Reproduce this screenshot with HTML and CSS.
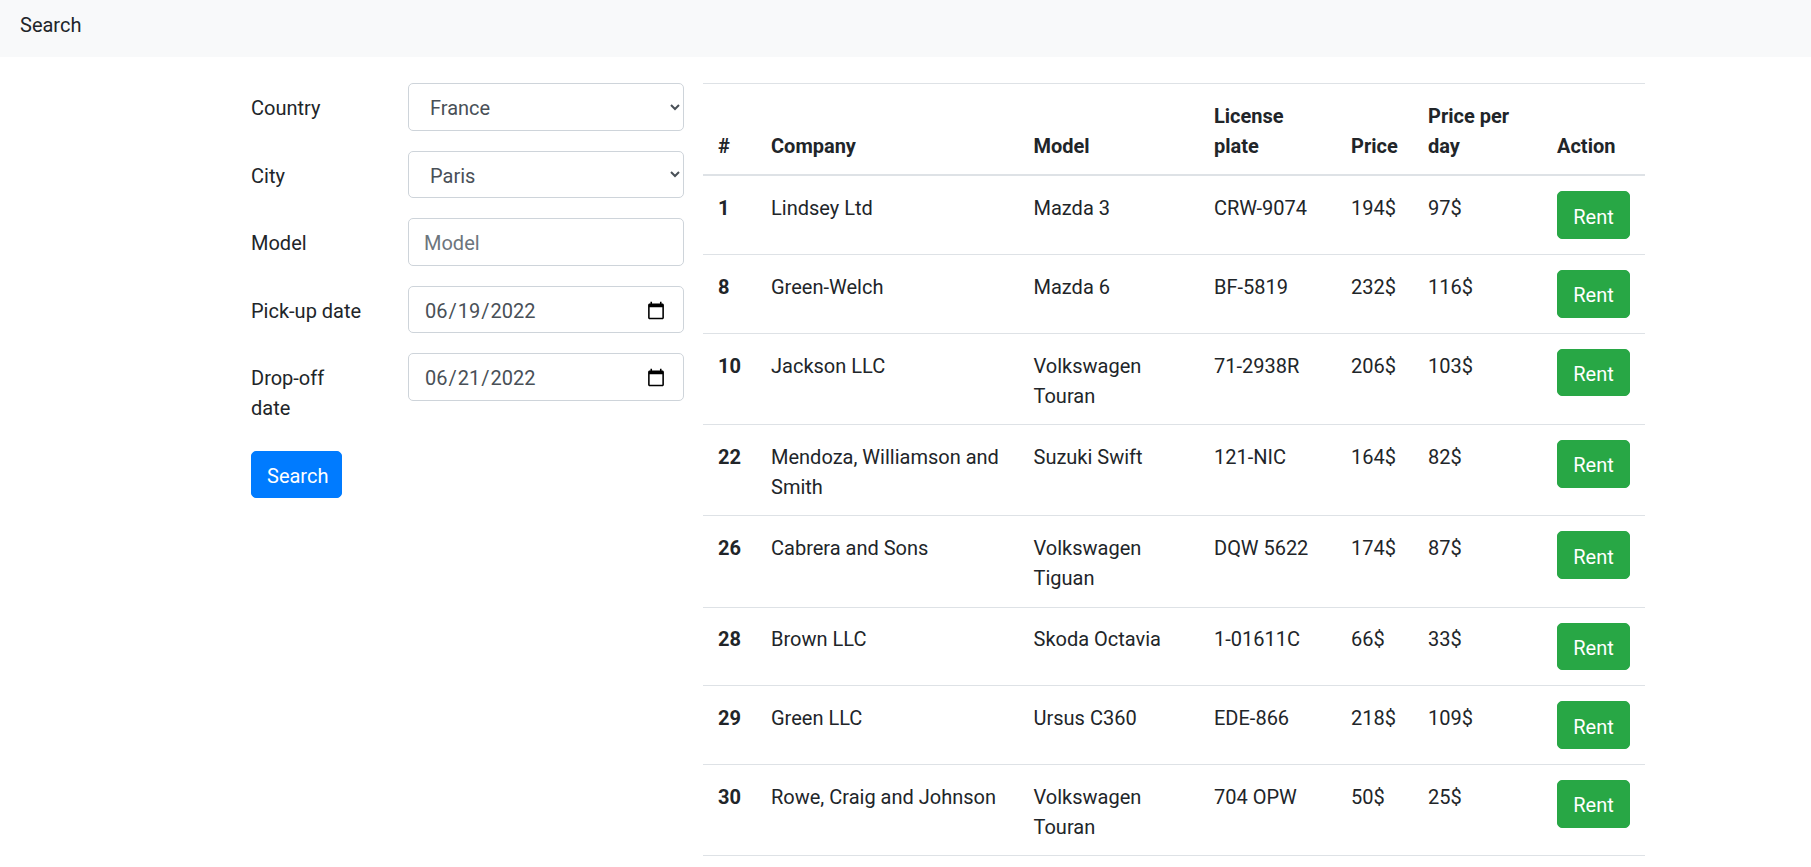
FILE: index.html
```html
<!DOCTYPE html>
<html lang="en">
<head>
<meta charset="utf-8">
<title>Search</title>
<link rel="stylesheet" href="styles.css">
</head>
<body>
<nav class="navbar"><span class="navbar-text">Search</span></nav>
<main class="page">
  <form class="search-form">
    <div class="form-row">
      <label class="form-label" for="country">Country</label>
      <div class="form-field">
        <select id="country" class="form-control form-select">
          <option>France</option>
        </select>
      </div>
    </div>
    <div class="form-row">
      <label class="form-label" for="city">City</label>
      <div class="form-field">
        <select id="city" class="form-control form-select">
          <option>Paris</option>
        </select>
      </div>
    </div>
    <div class="form-row">
      <label class="form-label" for="model">Model</label>
      <div class="form-field">
        <input id="model" class="form-control" type="text" placeholder="Model">
      </div>
    </div>
    <div class="form-row">
      <label class="form-label" for="pickup">Pick-up date</label>
      <div class="form-field">
        <input id="pickup" class="form-control" type="date" value="2022-06-19">
      </div>
    </div>
    <div class="form-row">
      <label class="form-label" for="dropoff">Drop-off date</label>
      <div class="form-field">
        <input id="dropoff" class="form-control" type="date" value="2022-06-21">
      </div>
    </div>
    <button type="button" class="btn btn-primary">Search</button>
  </form>

  <table class="cars-table">
    <colgroup>
      <col class="col-id">
      <col class="col-company">
      <col class="col-model">
      <col class="col-plate">
      <col class="col-price">
      <col class="col-day">
      <col class="col-action">
    </colgroup>
    <thead>
      <tr>
        <th>#</th>
        <th>Company</th>
        <th>Model</th>
        <th>License plate</th>
        <th>Price</th>
        <th>Price per day</th>
        <th>Action</th>
      </tr>
    </thead>
    <tbody>
      <tr><th>1</th><td>Lindsey Ltd</td><td>Mazda 3</td><td>CRW-9074</td><td>194$</td><td>97$</td><td class="action-cell"><button type="button" class="btn btn-success">Rent</button></td></tr>
      <tr><th>8</th><td>Green-Welch</td><td>Mazda 6</td><td>BF-5819</td><td>232$</td><td>116$</td><td class="action-cell"><button type="button" class="btn btn-success">Rent</button></td></tr>
      <tr><th>10</th><td>Jackson LLC</td><td>Volkswagen Touran</td><td>71-2938R</td><td>206$</td><td>103$</td><td class="action-cell"><button type="button" class="btn btn-success">Rent</button></td></tr>
      <tr><th>22</th><td>Mendoza, Williamson and Smith</td><td>Suzuki Swift</td><td>121-NIC</td><td>164$</td><td>82$</td><td class="action-cell"><button type="button" class="btn btn-success">Rent</button></td></tr>
      <tr><th>26</th><td>Cabrera and Sons</td><td>Volkswagen Tiguan</td><td>DQW 5622</td><td>174$</td><td>87$</td><td class="action-cell"><button type="button" class="btn btn-success">Rent</button></td></tr>
      <tr><th>28</th><td>Brown LLC</td><td>Skoda Octavia</td><td>1-01611C</td><td>66$</td><td>33$</td><td class="action-cell"><button type="button" class="btn btn-success">Rent</button></td></tr>
      <tr><th>29</th><td>Green LLC</td><td>Ursus C360</td><td>EDE-866</td><td>218$</td><td>109$</td><td class="action-cell"><button type="button" class="btn btn-success">Rent</button></td></tr>
      <tr><th>30</th><td>Rowe, Craig and Johnson</td><td>Volkswagen Touran</td><td>704 OPW</td><td>50$</td><td>25$</td><td class="action-cell"><button type="button" class="btn btn-success">Rent</button></td></tr>
    </tbody>
  </table>
</main>
</body>
</html>
```

FILE: styles.css
```css
* {
  box-sizing: border-box;
}

html, body {
  margin: 0;
  padding: 0;
}

body {
  font-family: Roboto, "Noto Sans", "Liberation Sans", sans-serif;
  font-size: 20px;
  line-height: 30px;
  color: #212529;
  background: #fff;
}

.navbar {
  display: flex;
  align-items: flex-start;
  height: 57px;
  padding: 10px 20px 0 20px;
  background: #f8f9fa;
}

.navbar-text {
  color: #212529;
  line-height: 30px;
}

.page {
  display: flex;
  align-items: flex-start;
  gap: 19px;
  padding: 26px 0 0 251px;
}

.search-form {
  flex: 0 0 433px;
  display: flex;
  flex-direction: column;
  align-items: flex-start;
}

.form-row {
  display: flex;
  align-items: flex-start;
  width: 100%;
  margin-bottom: 20px;
}

.form-label {
  flex: 0 0 157px;
  padding: 10.25px 43px 7.25px 0;
  line-height: 30px;
}

.form-field {
  flex: 1 1 auto;
}

.form-control {
  display: block;
  width: 100%;
  height: 47.5px;
  padding: 9px 15px 6px 15px;
  font-family: inherit;
  font-size: 20px;
  line-height: 30px;
  color: #495057;
  background-color: #fff;
  border: 1px solid #ced4da;
  border-radius: 5px;
}

.form-select {
  padding-left: 17px;
}

.form-control::placeholder {
  color: #6c757d;
  opacity: 1;
}

.btn {
  display: inline-block;
  height: 47.5px;
  padding: 9px 15px 6px 15px;
  font-family: inherit;
  font-size: 20px;
  line-height: 30px;
  font-weight: 400;
  color: #fff;
  border: 1px solid transparent;
  border-radius: 5px;
  cursor: pointer;
}

.btn-primary {
  background-color: #007bff;
  border-color: #007bff;
  width: 91px;
}

.btn-success {
  background-color: #28a745;
  border-color: #28a745;
  width: 73px;
}

.cars-table {
  flex: 0 0 942px;
  width: 942px;
  table-layout: fixed;
  border-collapse: collapse;
  color: #212529;
}

.col-id { width: 53px; }
.col-company { width: 262.5px; }
.col-model { width: 180.5px; }
.col-plate { width: 137px; }
.col-price { width: 77px; }
.col-day { width: 129px; }
.col-action { width: 103px; }

.cars-table th,
.cars-table td {
  padding: 16.75px 15px 13.5px 15px;
  text-align: left;
  vertical-align: top;
  border-top: 1px solid #dee2e6;
  font-size: 20px;
  line-height: 30px;
}

.cars-table td.action-cell {
  padding: 15px 15px 15.25px 15px;
}

.cars-table th {
  font-weight: 700;
}

.cars-table thead th {
  vertical-align: bottom;
  border-bottom: 2.5px solid #dee2e6;
}

.cars-table tbody tr:last-child th,
.cars-table tbody tr:last-child td {
  border-bottom: 1px solid #dee2e6;
}
```
